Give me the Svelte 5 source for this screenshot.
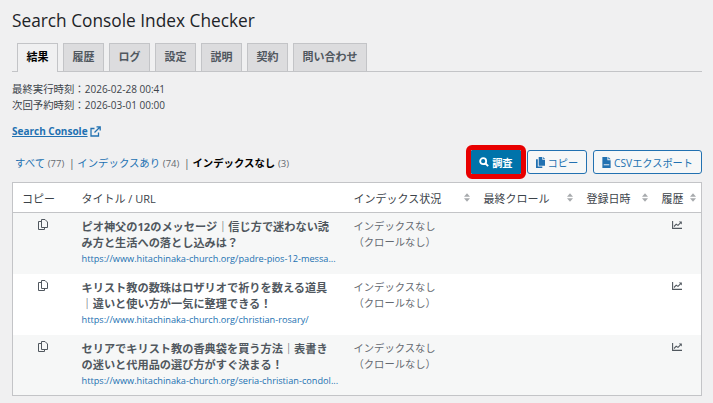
<script>
    const tabs = ['結果', '履歴', 'ログ', '設定', '説明', '契約', '問い合わせ']

    const columns = [
        { label: 'コピー', cls: 'col-copy' },
        { label: 'タイトル / URL', cls: 'col-title' },
        { label: 'インデックス状況', cls: 'col-status', sort: true },
        { label: '最終クロール', cls: 'col-crawl', sort: true },
        { label: '登録日時', cls: 'col-date', sort: true },
        { label: '履歴', cls: 'col-hist', sort: true }
    ]

    const rows = [
        {
            title: 'ピオ神父の12のメッセージ｜信じ方で迷わない読み方と生活への落とし込みは？',
            url: 'https://www.hitachinaka-church.org/padre-pios-12-messa...'
        },
        {
            title: 'キリスト教の数珠はロザリオで祈りを数える道具｜違いと使い方が一気に整理できる！',
            url: 'https://www.hitachinaka-church.org/christian-rosary/'
        },
        {
            title: 'セリアでキリスト教の香典袋を買う方法｜表書きの迷いと代用品の選び方がすぐ決まる！',
            url: 'https://www.hitachinaka-church.org/seria-christian-condol...'
        }
    ]
</script>

<div class="wrap">
    <h1>Search Console Index Checker</h1>

    <div class="tabs">
        {#each tabs as tab, i}
            <div class="tab" class:active={i === 0}>{tab}</div>
        {/each}
    </div>

    <div class="meta">
        <div>最終実行時刻：<span class="time">2026-02-28 00:41</span></div>
        <div>次回予約時刻：<span class="time">2026-03-01 00:00</span></div>
    </div>

    <div class="console-link">
        <span class="link-text">Search Console</span>
        <svg width="11" height="11" viewBox="0 0 11 11" fill="none" stroke="#2271b1" stroke-width="1.3">
            <path d="M8.5 6.5V10H1V2.5H4.5" />
            <path d="M4.5 6.5L10 1M6.5 .8H10.2V4.5" />
        </svg>
    </div>

    <div class="toolbar">
        <div class="filters">
            <span class="filter">すべて</span> <span class="count">(77)</span>
            <span class="sep">|</span>
            <span class="filter">インデックスあり</span> <span class="count">(74)</span>
            <span class="sep">|</span>
            <span class="current">インデックスなし</span> <span class="count">(3)</span>
        </div>
        <div class="actions">
            <button class="btn primary">
                <svg width="10" height="10" viewBox="0 0 12 12" fill="none" stroke="#fff" stroke-width="2.2">
                    <circle cx="5" cy="5" r="3.6" />
                    <path d="M7.8 7.8L11 11" />
                </svg>
                調査
            </button>
            <button class="btn">
                <svg width="9" height="11" viewBox="0 0 10 12" fill="#2271b1">
                    <path d="M3 0H7V3H10V9.5H3Z" />
                    <path d="M8 0L10 2H8Z" />
                    <path d="M0 2.5H2V10.5H7V12H0Z" />
                </svg>
                コピー
            </button>
            <button class="btn">
                <svg width="9" height="11" viewBox="0 0 9 12" fill="#2271b1">
                    <path d="M0 0H5.5V3.5H9V12H0Z" />
                    <path d="M6.5 0L9 2.5H6.5Z" />
                    <path d="M1.5 8H7.5V9H1.5Z" fill="#f6f7f7" />
                </svg>
                CSVエクスポート
            </button>
        </div>
    </div>

    <table>
        <thead>
            <tr>
                {#each columns as col}
                    <th class={col.cls}>
                        <div class="th-inner">
                            <span>{col.label}</span>
                            {#if col.sort}
                                <svg class="sort" width="6" height="9" viewBox="0 0 7 10" fill="#a7aaad">
                                    <path d="M3.5 0L7 4H0Z" />
                                    <path d="M3.5 10L7 6H0Z" />
                                </svg>
                            {/if}
                        </div>
                    </th>
                {/each}
            </tr>
        </thead>
        <tbody>
            {#each rows as row}
                <tr>
                    <td class="cell-copy">
                        <svg width="10" height="11" viewBox="0 0 10 11" fill="none" stroke="#50575e" stroke-width="1">
                            <path d="M3.5 .5H7L9.5 3V8.5H3.5Z" />
                            <path d="M3.5 2.5H.5V10.5H6.5V8.5" />
                        </svg>
                    </td>
                    <td>
                        <div class="title">{row.title}</div>
                        <div class="url">{row.url}</div>
                    </td>
                    <td class="status">インデックスなし<br />（クロールなし）</td>
                    <td></td>
                    <td></td>
                    <td class="cell-hist">
                        <svg width="10" height="8" viewBox="0 0 10 8" fill="none" stroke="#50575e" stroke-width="1.1">
                            <path d="M.6 0V7.4H10" />
                            <path d="M2 5.5L4.2 3.2L6 4.4L8.5 1.8" />
                            <path d="M6.8 .6H9.8V3.6Z" fill="#50575e" stroke="none" />
                        </svg>
                    </td>
                </tr>
            {/each}
        </tbody>
    </table>
</div>

<style>
    :global(body) {
        background: #f0f0f1;
        color: #3c434a;
        font-family: "Open Sans", "Noto Sans CJK JP", sans-serif;
        font-size: 11px;
    }

    .wrap {
        padding: 9px 11px 0 12px;
    }

    h1 {
        margin: 0;
        font-size: 17.3px;
        font-weight: 400;
        line-height: 24px;
        color: #1d2327;
    }

    .tabs {
        display: flex;
        gap: 5px;
        margin-top: 10px;
        padding-left: 5px;
        border-bottom: 1px solid #c3c4c7;
        height: 28px;
    }

    .tab {
        box-sizing: border-box;
        height: 28px;
        padding: 0 8.5px;
        text-align: center;
        line-height: 26px;
        font-size: 11px;
        font-weight: 700;
        color: #50575e;
        background: #dcdcde;
        border: 1px solid #c3c4c7;
        border-bottom: none;
    }

    .tab.active {
        height: 29px;
        background: #f0f0f1;
        color: #000;
    }

    .meta {
        margin-top: 9px;
        font-size: 10.4px;
        line-height: 16px;
    }

    .time {
        font-size: 10px;
    }

    .console-link {
        margin-top: 10px;
        display: flex;
        align-items: center;
        gap: 2px;
        height: 16px;
        font-size: 10px;
        font-weight: 700;
    }

    .link-text {
        color: #2271b1;
        text-decoration: underline;
    }

    .toolbar {
        display: flex;
        justify-content: space-between;
        align-items: center;
        margin-top: 11px;
        height: 24px;
    }

    .filters {
        padding-left: 3px;
        font-size: 10.4px;
        color: #50575e;
    }

    .filter {
        color: #2271b1;
    }

    .count {
        font-size: 9.5px;
        color: #646970;
    }

    .sep {
        margin-left: 2px;
        color: #50575e;
    }

    .current {
        font-weight: 700;
        color: #000;
    }

    .actions {
        display: flex;
        gap: 6px;
    }

    .btn {
        display: flex;
        align-items: center;
        gap: 3px;
        box-sizing: border-box;
        height: 24px;
        padding: 0 8px;
        font-family: inherit;
        font-size: 10.2px;
        color: #2271b1;
        background: #f6f7f7;
        border: 1px solid #2271b1;
        border-radius: 3px;
    }

    .btn.primary {
        padding: 0 7px;
        color: #fff;
        font-weight: 700;
        background: #0073aa;
        border-color: #0073aa;
        border-radius: 1px;
        outline: 5px solid #e80000;
    }

    table {
        width: 690px;
        margin-top: 8px;
        border-collapse: collapse;
        table-layout: fixed;
        background: #fff;
        border: 1px solid #c3c4c7;
    }

    th {
        box-sizing: border-box;
        height: 30px;
        padding: 0 5px 0 9px;
        font-size: 11px;
        font-weight: 400;
        text-align: left;
        border-bottom: 1px solid #c3c4c7;
    }

    .th-inner {
        display: flex;
        justify-content: space-between;
        align-items: center;
    }

    .col-copy { width: 60px; }
    .col-title { width: 272px; }
    .col-status { width: 130px; }
    .col-crawl { width: 103px; }
    .col-date { width: 75px; }

    tbody tr:nth-child(odd) {
        background: #f6f7f7;
    }

    td {
        height: 61px;
        box-sizing: border-box;
        padding: 6px 9px;
        vertical-align: top;
    }

    .cell-copy svg,
    .cell-hist svg {
        display: block;
        margin: 0 auto;
    }

    .cell-hist {
        padding-top: 8px;
    }

    .title {
        max-width: 254px;
        font-size: 11.2px;
        font-weight: 700;
        line-height: 16px;
        color: #50575e;
    }

    .url {
        font-size: 9.2px;
        line-height: 15px;
        color: #2271b1;
        white-space: nowrap;
    }

    td.status {
        padding-top: 5px;
        font-size: 10.3px;
        line-height: 16px;
        color: #646970;
    }
</style>
